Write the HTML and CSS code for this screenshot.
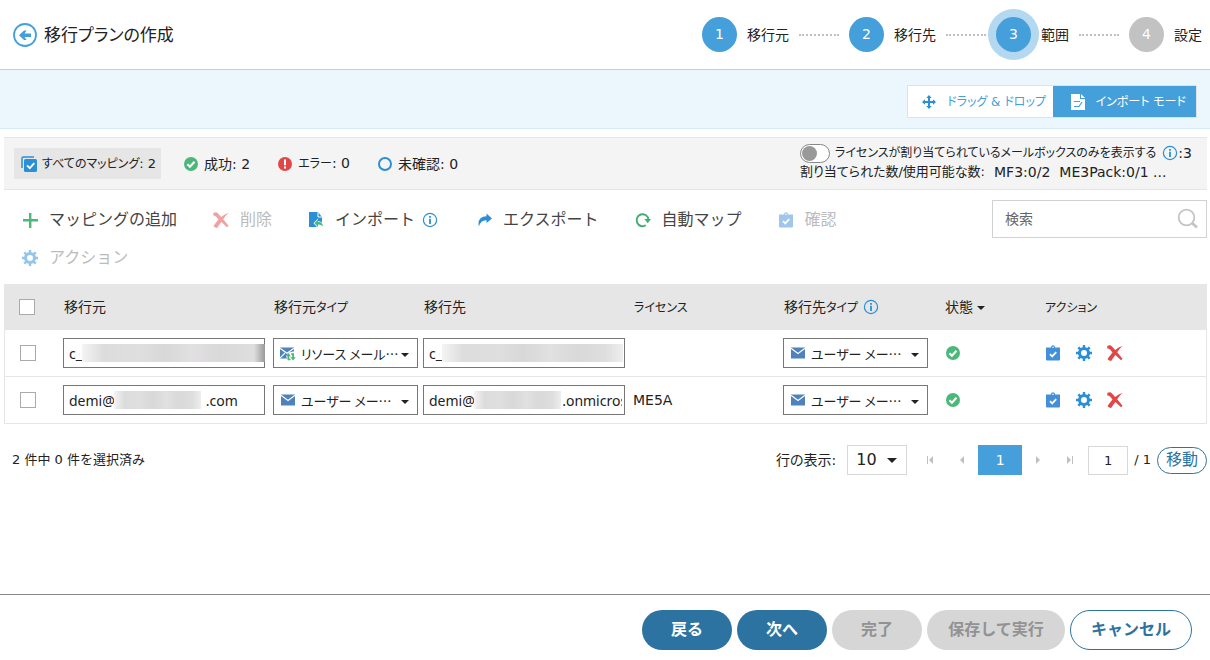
FILE: index.html
```
<!DOCTYPE html>
<html lang="ja">
<head>
    <meta charset="utf-8">
    <title>移行プランの作成</title>
    <meta name="viewport" content="width=device-width, initial-scale=1">
    <link rel="stylesheet" href="styles.css">
</head>
<body>
    <!-- shared icons -->
    <svg class="defs" width="0" height="0">
        <symbol id="i-info" viewBox="0 0 16 16"><circle cx="8" cy="8" r="6.6" fill="none" stroke="#2b8fd6" stroke-width="1.2"/><path d="M7.1 4h1.8v1.7H7.1zM7.1 6.8h1.8V12H7.1z" fill="#2b8fd6"/></symbol>
        <symbol id="i-ok" viewBox="0 0 16 16"><circle cx="8" cy="8" r="7" fill="#4bb87a"/><path d="M4.4 8.3l2.5 2.4 4.6-5" fill="none" stroke="#fff" stroke-width="2"/></symbol>
        <symbol id="i-gear" viewBox="0 0 16 16"><g fill="currentColor"><path d="M6.8 0h2.4v16H6.800zM0 6.800h16v2.400H0z"/><path d="M6.700 0h2.600v16H6.700zM0 6.700h16v2.600H0z" transform="rotate(45 8 8)"/><circle cx="8" cy="8" r="6"/></g><circle cx="8" cy="8" r="3" class="gear-hole"/></symbol>
        <symbol id="i-x" viewBox="0 0 16 16"><path d="M.3 1Q3.200-.5 5 1.500L8.200 5Q11.500 1.800 15.500 1 12 4 10.200 7.300L15.500 13.800 14 15.200 8.400 10Q6 13 4.200 16 1.800 16 .5 14 3 10.500 5.500 7.500L3.200 4.800Q2 3.500.3 3.500z" fill="currentColor"/></symbol>
        <symbol id="i-clip" viewBox="0 0 16 16"><path d="M1 2.500h4.800Q6.200.3 8 .3t2.200 2.200H15v12q0 1-1 1H2q-1 0-1-1z" fill="currentColor"/><circle cx="8" cy="2.300" r=".8" fill="#fff"/><path d="M5 9.200l2.200 2.200 4-4.200" fill="none" stroke="#fff" stroke-width="1.800"/></symbol>
        <symbol id="i-mail" viewBox="0 0 16 12"><path d="M1 .500h14v11H1z" fill="#4f81bd"/><path d="M1 1.200l7 5.300 7-5.300" fill="none" stroke="#fff" stroke-width="1.100"/></symbol>
        <symbol id="i-mailres" viewBox="0 0 16 14"><path d="M0 .500h14v11H0z" fill="#4f81bd"/><path d="M0 1.200l7 5 7-5M0 11l5-5" fill="none" stroke="#fff" stroke-width="1.100"/><path d="M6 9l3-3.500 6-1.500 1 10H8z" fill="#fff"/><path d="M8.500 6L5.800 9.300h1.700v4h3v-1.500H9.300V9.300h1.600zM13 13.500l2.800-3.200H14V6.200h-3v1.500h1.200v2.600h-1.800z" fill="#4bb87a"/></symbol>
        <symbol id="i-caret" viewBox="0 0 8 4"><path d="M0 0h8L4 4z" fill="#222"/></symbol>
    </svg>

    <header class="top">
        <a href="#" class="back" aria-label="戻る">
            <svg width="24" height="24" viewBox="0 0 24 24"><circle cx="12" cy="12" r="11" fill="none" stroke="#459fda" stroke-width="1.800"/><path d="M6 12.200l5-4.700h2.600l-2 3H18v3.400h-6.400l2 3H11z" fill="#459fda"/></svg>
        </a>
        <h1>移行プランの作成</h1>
        <ol class="steps">
            <li><span class="num">1</span>移行元</li>
            <li><span class="num">2</span>移行先</li>
            <li><span class="num now">3</span>範囲</li>
            <li><span class="num off">4</span>設定</li>
        </ol>
    </header>

    <div class="modebar">
        <div class="modes">
            <button class="mode"><svg width="14" height="14" viewBox="0 0 14 14"><path d="M7 0l2.700 3H8v3h3V4.300L14 7l-3 2.700V8H8v3h1.700L7 14l-2.700-3H6V8H3v1.700L0 7l3-2.700V6h3V3H4.300z" fill="#2b8fd6"/></svg>ドラッグ &amp; ドロップ</button>
            <button class="mode active"><svg width="14" height="16" viewBox="0 0 14 16"><path d="M0 0h9v5h5v11H0z" fill="#fff"/><path d="M10 0l4 4h-4z" fill="#fff"/><path d="M3 7.500h6M3 12.500h5l3-4.500" fill="none" stroke="#459fda" stroke-width="1.200"/></svg>インポート モード</button>
        </div>
    </div>

    <main>
        <div class="stats">
            <button class="stat active"><svg width="16" height="16" viewBox="0 0 16 16"><path d="M1 12V2.500Q1 1 2.500 1H13" fill="none" stroke="#2b8fd6" stroke-width="1.500"/><rect x="3" y="3" width="13" height="13" rx="1.500" fill="#2b8fd6"/><path d="M6 9.300l2.800 2.800 4.500-5" fill="none" stroke="#fff" stroke-width="1.800"/></svg><span><span class="kana">すべてのマッピング</span>: 2</span></button>
            <button class="stat"><svg width="16" height="16"><use href="#i-ok"/></svg>成功: 2</button>
            <button class="stat"><svg width="16" height="16" viewBox="0 0 16 16"><circle cx="8" cy="8" r="7" fill="#e04848"/><path d="M7 3.500h2v5.700H7zM7 10.500h2v2H7z" fill="#fff"/></svg><span><span class="kana">エラー</span>: 0</span></button>
            <button class="stat"><svg width="16" height="16" viewBox="0 0 16 16"><circle cx="8" cy="8" r="6" fill="none" stroke="#2b8fd6" stroke-width="2"/></svg>未確認: 0</button>
            <div class="licence">
                <div class="lic-row">
                    <input type="checkbox" class="switch" id="only-lic">
                    <label for="only-lic" class="kana">ライセンスが割り当てられているメールボックスのみを表示する</label>
                    <svg width="16" height="16"><use href="#i-info"/></svg><span>:3</span>
                </div>
                <div class="lic-row"><span class="small">割り当てられた数/使用可能な数:</span> <span class="plan">MF3:0/2</span><span class="plan">ME3Pack:0/1 ...</span></div>
            </div>
        </div>

        <div class="toolbar">
            <div class="tools">
                <button class="tool"><svg width="16" height="16" viewBox="0 0 16 16"><path d="M7 1h2.400v6H16v2.400H9.400V16H7V9.400H1V7h6z" fill="#4bb87a"/></svg>マッピングの追加</button>
                <button class="tool red" disabled><svg width="16" height="16"><use href="#i-x"/></svg>削除</button>
                <button class="tool"><svg width="16" height="16" viewBox="0 0 16 16"><path d="M1 0h9l4 5v10H1z" fill="#2b8fd6"/><path d="M10 0v5h4" fill="none" stroke="#fff"/><path d="M5.500 11.200L10 6.500v2.500q5 .5 6 6l-4 1-3-1z" fill="#fff"/><path d="M6.500 11.200L10 7.500v2.300q4.500.2 5 4.700-2-2.300-5-2v2.400z" fill="#4bb87a"/></svg>インポート<svg class="tip" width="16" height="16"><use href="#i-info"/></svg></button>
                <button class="tool"><svg width="14" height="14" viewBox="0 0 14 14"><path d="M8.500.500L14 5.500 8.500 10V7.300Q3 7 .800 13.500-.8 3.500 8.500 3.300z" fill="#2b8fd6"/></svg>エクスポート</button>
                <button class="tool"><svg width="16" height="16" viewBox="0 0 16 16"><path d="M10.800 13.300a6 6 0 1 1 2.700-6.300" fill="none" stroke="#3fb06e" stroke-width="1.900"/><path d="M9.300 7H16l-3.300 4.300z" fill="#3fb06e"/></svg>自動マップ</button>
                <button class="tool blue" disabled><svg width="16" height="16"><use href="#i-clip"/></svg>確認</button>
                <button class="tool sky" disabled><svg width="16" height="16"><use href="#i-gear"/></svg>アクション</button>
            </div>
            <div class="search">
                <input type="text" placeholder="検索" aria-label="検索">
                <svg width="22" height="22" viewBox="0 0 22 22"><circle cx="9.500" cy="9.500" r="7.800" fill="none" stroke="#c4c4c4" stroke-width="1.800"/><path d="M15 15l5 4.500" stroke="#c4c4c4" stroke-width="2.800"/></svg>
            </div>
        </div>

        <table class="grid">
            <colgroup><col class="c-check"><col class="c-addr"><col class="c-type"><col class="c-addr"><col class="c-type"><col class="c-dest"><col class="c-state"><col></colgroup>
            <thead>
                <tr>
                    <th><input type="checkbox" aria-label="すべて選択"></th>
                    <th>移行元</th>
                    <th>移行元<span class="kana">タイプ</span></th>
                    <th>移行先</th>
                    <th><span class="kana">ライセンス</span></th>
                    <th>移行先<span class="kana">タイプ</span> <svg width="16" height="16"><use href="#i-info"/></svg></th>
                    <th>状態 <svg class="sort" width="8" height="4"><use href="#i-caret"/></svg></th>
                    <th><span class="kana">アクション</span></th>
                </tr>
            </thead>
            <tbody>
                <tr>
                    <td><input type="checkbox" aria-label="行 1 を選択"></td>
                    <td><div class="field"><input type="text" value="c_" aria-label="移行元"><span class="mask full dark"></span></div></td>
                    <td><div class="pick"><svg class="mail" width="16" height="14"><use href="#i-mailres"/></svg><select aria-label="移行元タイプ"><option>リソース メール…</option></select><svg class="caret" width="8" height="4"><use href="#i-caret"/></svg></div></td>
                    <td><div class="field"><input type="text" value="c_" aria-label="移行先"><span class="mask full"></span></div></td>
                    <td></td>
                    <td><div class="pick"><svg class="mail" width="16" height="12"><use href="#i-mail"/></svg><select aria-label="移行先タイプ"><option>ユーザー メー…</option></select><svg class="caret" width="8" height="4"><use href="#i-caret"/></svg></div></td>
                    <td><svg class="state" width="16" height="16"><use href="#i-ok"/></svg></td>
                    <td>
                        <div class="acts">
                            <button class="blue" aria-label="確認"><svg width="16" height="16"><use href="#i-clip"/></svg></button>
                            <button class="sky" aria-label="設定"><svg width="16" height="16"><use href="#i-gear"/></svg></button>
                            <button class="red" aria-label="削除"><svg width="16" height="16"><use href="#i-x"/></svg></button>
                        </div>
                    </td>
                </tr>
                <tr>
                    <td><input type="checkbox" aria-label="行 2 を選択"></td>
                    <td><div class="field"><input type="text" value="demi@                         .com" aria-label="移行元"><span class="mask part"></span></div></td>
                    <td><div class="pick"><svg class="mail" width="16" height="12"><use href="#i-mail"/></svg><select aria-label="移行元タイプ"><option>ユーザー メー…</option></select><svg class="caret" width="8" height="4"><use href="#i-caret"/></svg></div></td>
                    <td><div class="field"><input type="text" value="demi@                        .onmicrosoft.com" aria-label="移行先"><span class="mask part"></span></div></td>
                    <td>ME5A</td>
                    <td><div class="pick"><svg class="mail" width="16" height="12"><use href="#i-mail"/></svg><select aria-label="移行先タイプ"><option>ユーザー メー…</option></select><svg class="caret" width="8" height="4"><use href="#i-caret"/></svg></div></td>
                    <td><svg class="state" width="16" height="16"><use href="#i-ok"/></svg></td>
                    <td>
                        <div class="acts">
                            <button class="blue" aria-label="確認"><svg width="16" height="16"><use href="#i-clip"/></svg></button>
                            <button class="sky" aria-label="設定"><svg width="16" height="16"><use href="#i-gear"/></svg></button>
                            <button class="red" aria-label="削除"><svg width="16" height="16"><use href="#i-x"/></svg></button>
                        </div>
                    </td>
                </tr>
            </tbody>
        </table>

        <div class="pager">
            <span class="picked">2 件中 0 件を選択済み</span>
            <label for="rows">行の表示:</label>
            <div class="rows">
                <select id="rows"><option>10</option></select>
                <svg class="caret" width="10" height="5"><use href="#i-caret"/></svg>
            </div>
            <div class="pages">
                <button class="nav" aria-label="最初"><svg width="6" height="8" viewBox="0 0 6 8"><path d="M0 0h1v8H0zM6 0v8L2 4z" fill="#c0c0c0"/></svg></button>
                <button class="nav" aria-label="前へ"><svg width="6" height="8" viewBox="0 0 6 8"><path d="M5 0v8L1 4z" fill="#c0c0c0"/></svg></button>
                <button class="page">1</button>
                <button class="nav" aria-label="次へ"><svg width="6" height="8" viewBox="0 0 6 8"><path d="M1 0v8l4-4z" fill="#c0c0c0"/></svg></button>
                <button class="nav" aria-label="最後"><svg width="6" height="8" viewBox="0 0 6 8"><path d="M5 0h1v8H5zM0 0v8l4-4z" fill="#c0c0c0"/></svg></button>
            </div>
            <input type="text" class="goto" value="1" aria-label="ページ">
            <span class="total">/ 1</span>
            <button class="go">移動</button>
        </div>
    </main>

    <footer>
        <button class="btn">戻る</button>
        <button class="btn">次へ</button>
        <button class="btn" disabled>完了</button>
        <button class="btn wide" disabled>保存して実行</button>
        <button class="btn line">キャンセル</button>
    </footer>
</body>
</html>
```
FILE: styles.css
```
* { box-sizing: border-box; }
body { margin: 0; min-height: 100vh; display: flex; flex-direction: column; background: #fff; color: #222; font: 14px/18px "DejaVu Sans", "Noto Sans CJK JP", sans-serif; font-feature-settings: "palt"; }
button, input, select { font: inherit; font-feature-settings: inherit; color: inherit; }
button { border: none; background: none; padding: 0; white-space: nowrap; }
svg { display: block; flex: none; }
.defs { position: absolute; }
.gear-hole { fill: #fff; }
.kana { font-size: 12px; }
.small { font-size: 13px; }

/* Header and steps */
.top { display: flex; align-items: center; height: 70px; padding: 0 8px 0 13px; border-bottom: 1px solid #ccc; }
.top h1 { margin: 0 auto 0 7px; font-size: 17px; font-weight: normal; line-height: 24px; }
.steps { display: flex; align-items: center; gap: 10px; margin: 0; padding: 0; list-style: none; font-feature-settings: normal; }
.steps li { display: flex; align-items: center; gap: 10px; }
.steps li + li::before { content: ""; width: 40px; border-top: 2px dotted #c0c0c0; }
.num { width: 35px; height: 35px; border-radius: 50%; background: #459fda; color: #fff; line-height: 35px; text-align: center; }
.num.now { box-shadow: 0 0 0 8px #b3d8ef; }
.num.off { background: #c2c2c2; }

/* Mode switch */
.modebar { display: flex; justify-content: flex-end; height: 59px; padding: 15px 13px 0 0; background: #ebf6fd; border-bottom: 1px solid #d2ecf9; }
.modes { display: flex; height: 33px; border: 1px solid #e2e2e2; }
.mode { display: flex; align-items: center; justify-content: flex-end; gap: 11px; width: 145px; padding-right: 7px; background: #fff; color: #459fda; font-size: 12px; }
.mode.active { width: 143px; padding-right: 10px; background: #459fda; color: #fff; }

main { padding: 8px 3px 0 4px; }

/* Counters */
.stats { display: flex; align-items: center; height: 53px; padding: 0 10px; background: #f4f4f4; border: solid #e6e6e6; border-width: 1px 0; }
.stat { display: flex; align-items: center; gap: 5px; height: 31px; padding: 0 5px 0 7px; margin-right: 15px; }
.stat.active { background: #e6e6e6; font-size: 13px; }
.licence { width: 397px; margin-left: auto; padding-bottom: 2px; white-space: nowrap; }
.lic-row { display: flex; align-items: center; height: 19px; }
.lic-row label { margin: 0 6px 0 5px; }
.plan { margin-left: 9px; }
.switch { appearance: none; flex: none; width: 30px; height: 19px; margin: 0; padding: 1px; border: 1px solid #888; border-radius: 10px; background: #fff; }
.switch::before { content: ""; display: block; width: 15px; height: 15px; border-radius: 50%; background: #999; }

/* Toolbar */
.toolbar { display: flex; align-items: flex-start; justify-content: space-between; padding-top: 10px; }
.tools { display: flex; flex-wrap: wrap; column-gap: 36px; flex: 1; padding: 0 30px 0 18px; }
.tool { display: flex; align-items: center; gap: 11px; height: 38px; padding-top: 1px; color: #444; font-size: 16px; font-feature-settings: normal; }
.tool .tip { margin: 0 4px 0 -4px; }
.tool:disabled { color: #bbb; }
.tool:disabled svg { opacity: 0.5; }
.red svg { color: #e04848; }
.blue svg { color: #4490d8; }
.sky svg { color: #2b8fd6; }
.search { position: relative; width: 215px; }
.search input { width: 100%; height: 38px; padding: 0 40px 0 12px; border: 1px solid #d2d2d2; background: #fff; }
.search input::placeholder { color: #666; }
.search svg { position: absolute; top: 8px; right: 8px; }

/* Mapping table */
.grid { width: 100%; margin-top: 8px; table-layout: fixed; border-collapse: separate; border-spacing: 0; border: solid #e6e6e6; border-width: 0 1px; }
.c-check { width: 54px; }
.c-addr { width: 210px; }
.c-type { width: 150px; }
.c-dest { width: 161px; }
.c-state { width: 100px; }
.grid th { height: 46px; padding: 0 4px 0 5px; background: #e6e6e6; font-weight: normal; text-align: left; white-space: nowrap; }
.grid td { height: 47px; padding: 0 4px; border-bottom: 1px solid #e6e6e6; }
.grid th svg { display: inline-block; vertical-align: -3px; }
.grid th .sort { vertical-align: 2px; }
.grid input[type=checkbox] { appearance: none; display: block; width: 16px; height: 16px; margin: 0 0 0 11px; border: 1px solid #aaa; background: #fff; }
.grid th input[type=checkbox] { margin-left: 9px; }
.field, .pick { position: relative; }
.field input { display: block; width: 100%; height: 30px; padding: 0 2px 0 5px; border: 1px solid #777; font: 14px "Noto Sans", "Open Sans", sans-serif; color: #222; }
.mask { position: absolute; top: 6px; height: 18px; background: linear-gradient(90deg, #f4f4f4, #dcdcdc 12%, #e0dfdf 30%, #d8d8d8 45%, #e2e0e2 60%, #d9d9d9 75%, #dedede 90%, #eee); }
.mask.full { left: 19px; right: 2px; }
.mask.dark { right: 0; background: linear-gradient(90deg, #f4f4f4, #dcdcdc 12%, #e0dfdf 30%, #d8d8d8 45%, #e2e0e2 60%, #d9d9d9 75%, #dedede 94%, #999); }
.mask.part { left: 51px; width: 87px; }
.pick { width: 145px; }
.pick select { appearance: none; display: block; width: 100%; height: 30px; padding: 0 16px 0 27px; border: 1px solid #777; border-radius: 0; background: #fff; font: 13px "Noto Sans CJK JP", sans-serif; font-feature-settings: "palt"; }
.mail { position: absolute; left: 7px; top: 9px; }
.pick .caret { position: absolute; right: 9px; top: 15px; }
.state { margin-left: 1px; }
.acts { display: flex; gap: 15px; padding-left: 1px; }

/* Pager */
.pager { display: flex; align-items: center; height: 30px; margin-top: 21px; }
.picked { margin: 0 auto 0 8px; font-size: 13px; font-feature-settings: normal; }
.rows { position: relative; margin-left: 11px; }
.rows select { appearance: none; display: block; width: 60px; height: 30px; padding: 0 8px; border: 1px solid #d8d8d8; border-radius: 0; background: #fff; font-size: 16px; }
.rows .caret { position: absolute; right: 10px; top: 13px; }
.pages { display: flex; align-items: center; margin: 0 2px 0 7px; }
.nav { display: flex; align-items: center; justify-content: center; width: 32px; height: 30px; }
.page { width: 44px; height: 30px; background: #459fda; color: #fff; }
.goto { width: 40px; height: 29px; padding: 0; border: 1px solid #d8d8d8; font-size: 13px; text-align: center; }
.total { margin: 0 6px; font-size: 13px; }
.go { width: 50px; height: 27px; border: 1px solid #2d73a1; border-radius: 14px; color: #2d73a1; font-size: 16px; }

/* Footer buttons */
footer { display: flex; justify-content: flex-end; gap: 5px; margin-top: auto; padding: 15px 18px 10px; border-top: 1px solid #888; }
.btn { width: 90px; height: 40px; border-radius: 20px; background: #2d73a1; color: #fff; font-size: 16px; font-weight: bold; font-feature-settings: normal; }
.btn:disabled { background: #d6d6d6; color: #929292; }
.btn.wide { width: 138px; }
.btn.line { width: 122px; border: 1px solid #2d73a1; background: #fff; color: #2d73a1; }
```
